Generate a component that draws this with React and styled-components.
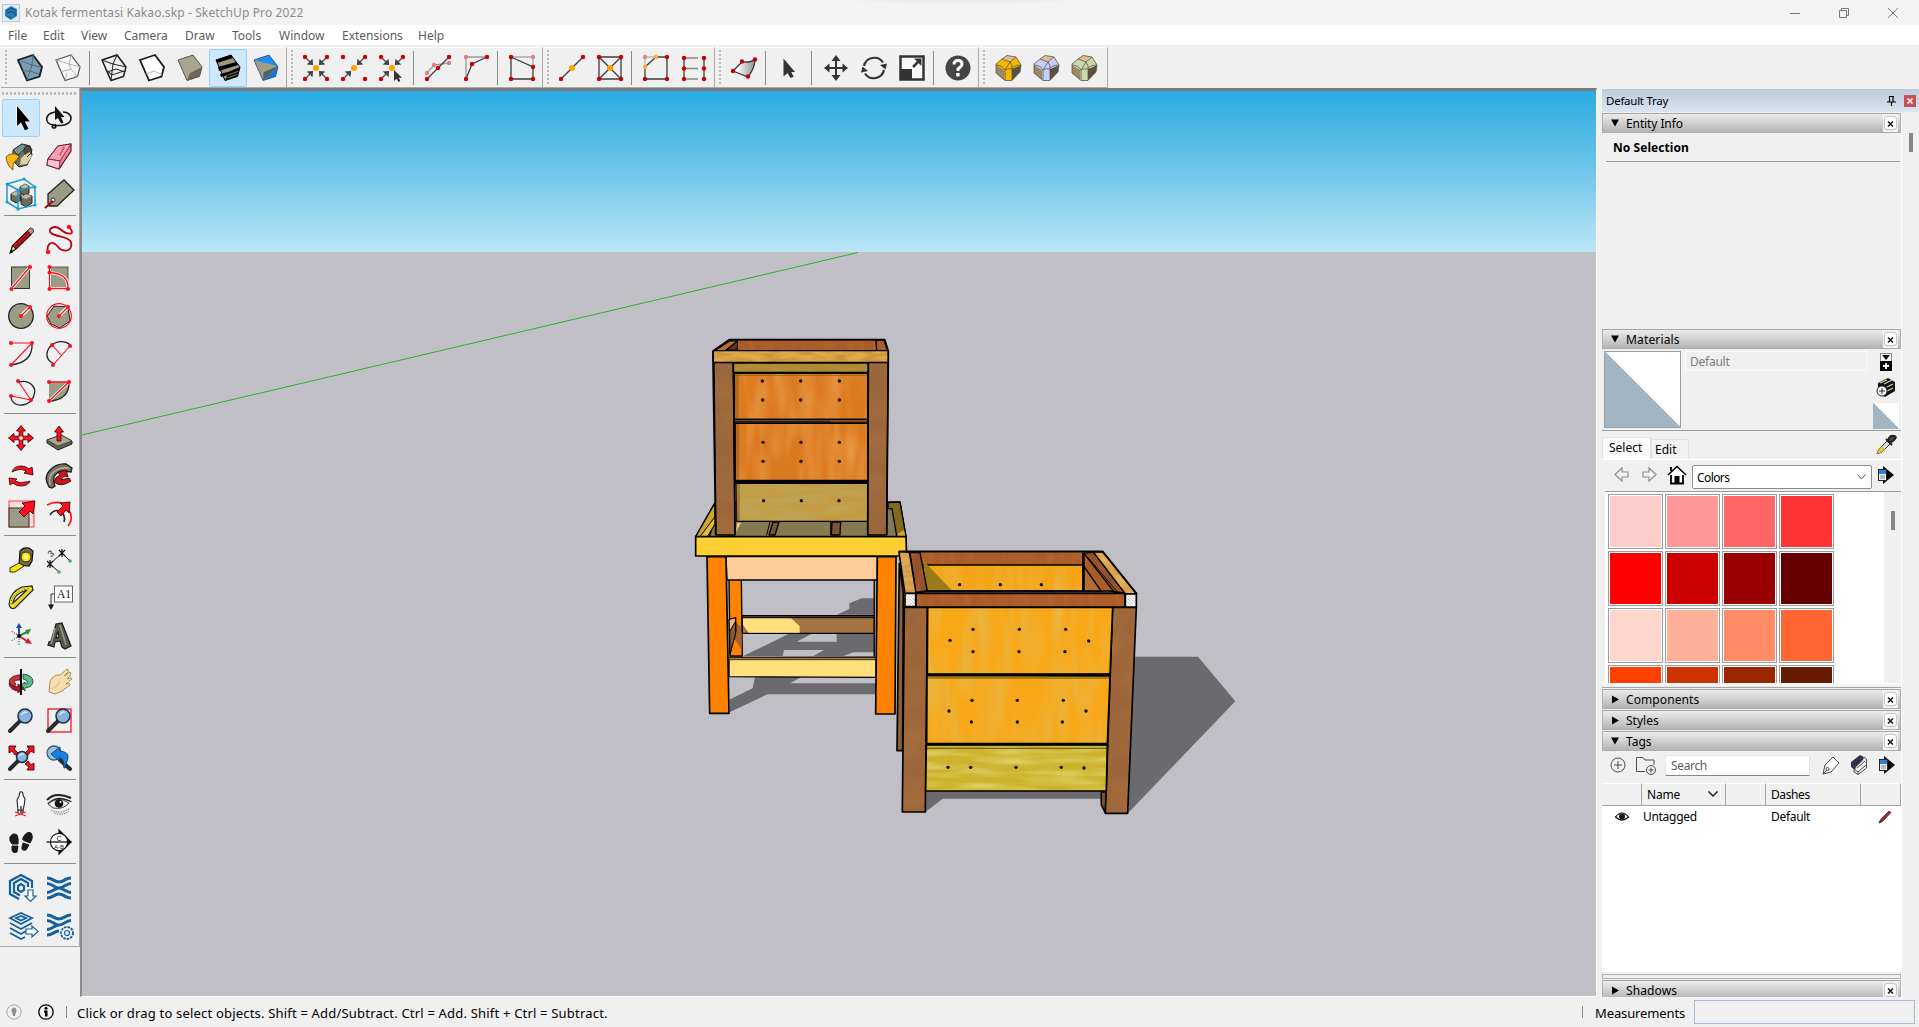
import React from "react";
import styled, { createGlobalStyle, css } from "styled-components";

const UI = '"Noto Sans", "Open Sans", sans-serif';
const STONE = "#9c9c84";
const RED = "#ff0f1c";

const Global = createGlobalStyle`
  * { box-sizing: border-box; }
  html, body { margin: 0; padding: 0; overflow: hidden; }
  body { background: #f0f0f0; font-family: ${UI}; color: #000; }
`;

/* ---------- window frame ---------- */
const Window = styled.div`
  width: 1919px;
  height: 1027px;
  display: flex;
  flex-direction: column;
  background: #f0f0f0;
`;
const TitleBar = styled.header`
  height: 25px;
  flex: none;
  display: flex;
  align-items: center;
  padding: 0 2px;
  background:
    radial-gradient(ellipse 125px 4px at 962px 0, #e4e4e4, #e4e4e400),
    #f3f3f3;
`;
const Title = styled.span`
  flex: 1;
  margin-left: 5px;
  font-size: 12px;
  letter-spacing: 0.11px;
  color: #8c8c8c;
  white-space: nowrap;
`;
const WindowButton = styled.span`
  width: 49px;
  height: 22px;
  display: flex;
  align-items: center;
  justify-content: center;
`;
const MenuBar = styled.nav`
  height: 20px;
  flex: none;
  display: flex;
  align-items: flex-start;
  padding: 2px 0 0 8px;
  background: #fff;
`;
const MenuItem = styled.span`
  width: ${(p) => p.$w}px;
  font-size: 12px;
  line-height: 18px;
  color: #5c5c5c;
  white-space: nowrap;
`;

/* ---------- toolbars ---------- */
const ToolbarRow = styled.div`
  height: 43px;
  flex: none;
  display: flex;
  align-items: stretch;
  padding: 2px 0 0 1px;
`;
const Toolbar = styled.div`
  display: flex;
  align-items: center;
  padding: 1px 1px 1px 0;
  border-top: 1px solid #fbfbfb;
  border-right: 1px solid #a8a8a8;
  border-bottom: 1px solid #a8a8a8;
  &:last-child { padding-right: 4px; }
`;
const Grip = styled.span`
  flex: none;
  ${(p) =>
    p.$horizontal
      ? css`
          height: 3px;
          width: 74px;
          background: repeating-linear-gradient(90deg, #b9b9b9 0 2px, transparent 2px 4px);
        `
      : css`
          width: 2px;
          height: 36px;
          margin: 0 4px;
          background: repeating-linear-gradient(180deg, #b9b9b9 0 2px, transparent 2px 4px);
        `}
`;
const ToolButton = styled.button`
  width: 38px;
  height: 38px;
  flex: none;
  padding: 0;
  border: 1px solid ${(p) => (p.$active ? "#99d1ff" : "transparent")};
  border-radius: 2px;
  background: ${(p) => (p.$active ? "#cce8ff" : "transparent")};
  display: flex;
  align-items: center;
  justify-content: center;
`;
const Divider = styled.span`
  flex: none;
  background: #8a8a8a;
  ${(p) =>
    p.$horizontal
      ? css`
          width: 72px;
          height: 1px;
          margin: 2px 2px 5px;
        `
      : css`
          width: 1px;
          height: 34px;
          margin: 0 5px 0 2px;
        `}
`;
const Glyph = styled.svg`
  display: block;
  flex: none;
  width: ${(p) => p.$w}px;
  height: ${(p) => p.$h || p.$w}px;
  overflow: visible;
`;

const Main = styled.main`
  height: 909px;
  flex: none;
  display: flex;
`;
const LeftDock = styled.aside`
  width: 80px;
  flex: none;
`;
const LeftToolbar = styled.div`
  width: 80px;
  height: 859px;
  padding: 4px 0 0 2px;
  border-right: 1px solid #a8a8a8;
  border-bottom: 1px solid #a8a8a8;
`;
const ToolGrid = styled.div`
  margin-top: ${(p) => (p.$first ? 4 : 0)}px;
  display: grid;
  grid-template-columns: 38px 38px;
  grid-auto-rows: 38px;
`;
const Viewport = styled.section`
  width: 1517px;
  height: 909px;
  flex: none;
  border-style: solid;
  border-width: 3px 1px 1px 2px;
  border-color: #7b7b7b #fff #fff #8a8a8a;
  background: #bfbfc5;
`;
const Canvas = styled.svg`
  display: block;
  width: 1514px;
  height: 905px;
`;

/* ---------- tray ---------- */
const Tray = styled.aside`
  width: 317px;
  margin-left: 5px;
  padding-top: 1px;
  flex: none;
  display: flex;
  flex-direction: column;
`;
const TrayHeader = styled.div`
  height: 23px;
  flex: none;
  display: flex;
  align-items: center;
  padding: 0 3px 0 4px;
  gap: 8px;
  font-size: 11.5px;
  background: linear-gradient(#bccad9, #d8e5f3);
`;
const Grow = styled.span`
  flex: 1;
  white-space: nowrap;
  letter-spacing: ${(p) => p.$ls || 0}px;
`;
const TrayClose = styled.span`
  width: 12px;
  height: 12px;
  background: #c75050;
  display: flex;
  align-items: center;
  justify-content: center;
`;
const TrayBody = styled.div`
  flex: 1;
  display: flex;
  padding-top: 1px;
`;
const Panels = styled.div`
  width: 300px;
  height: 884px;
  overflow: hidden;
  border-right: 1px solid #fff;
  display: flex;
  flex-direction: column;
`;
const TrayScroll = styled.div`
  width: 4px;
  height: 19px;
  margin: 20px 0 0 7px;
  background: #868686;
`;
const PanelHeader = styled.div`
  height: 20px;
  flex: none;
  margin-bottom: ${(p) => p.$gap || 0}px;
  display: flex;
  align-items: center;
  padding: 0 2px 0 8px;
  border: 1px solid #adadad;
  border-top-color: #a6a6a6;
  background: linear-gradient(#ececec, #b4b4b4);
  font-size: 12px;
  line-height: 15px;
  gap: 6px;
`;
const PanelClose = styled.span`
  width: 15px;
  height: 18px;
  background: #f0f0f0;
  display: flex;
  align-items: center;
  justify-content: center;
`;
const CloseFace = styled.span`
  width: 13px;
  height: 14px;
  border: 1px solid #c4c4c4;
  border-radius: 3px;
  background: #fff;
  display: flex;
  align-items: center;
  justify-content: center;
`;
const EntityBody = styled.div`
  height: 196px;
  flex: none;
  padding: 5px 1px 0 4px;
`;
const Selection = styled.div`
  height: 24px;
  padding: 1px 0 0 7px;
  font: bold 12px/18px ${UI};
  letter-spacing: 0.05px;
  border-bottom: 1px solid #9c9c9c;
`;
const MaterialTop = styled.div`
  height: 82px;
  flex: none;
  display: flex;
  padding: 2px 2px 0 2px;
  border-bottom: 1px solid #9c9c9c;
`;
const Preview = styled.div`
  width: ${(p) => p.$size}px;
  height: ${(p) => p.$size}px;
  border: ${(p) => (p.$framed ? "1px solid #989fa5" : "0")};
  background: linear-gradient(to top right, #a1b5c4 50%, #fff 50.5%);
`;
const NameField = styled.div`
  width: 183px;
  height: 20px;
  margin: 0 0 0 4px;
  padding-left: 4px;
  border: 1px solid #fafafa;
  font-size: 12px;
  line-height: 19px;
  letter-spacing: -0.25px;
  color: #7c7c7c;
`;
const IconStack = styled.div`
  margin-left: auto;
  width: 26px;
  padding-top: 2px;
  display: flex;
  flex-direction: column;
  align-items: center;
  gap: 6px;
`;
const Tabs = styled.div`
  height: 29px;
  flex: none;
  display: flex;
  align-items: flex-end;
  border-bottom: 1px solid #fff;
  padding-right: 5px;
`;
const Tab = styled.span`
  width: ${(p) => p.$w}px;
  height: ${(p) => (p.$active ? 22 : 20)}px;
  padding-left: ${(p) => (p.$active ? 6 : 3)}px;
  font-size: 12px;
  line-height: ${(p) => (p.$active ? 20 : 19)}px;
  border: 1px solid #e2e2e2;
  border-bottom: 0;
  background: ${(p) => (p.$active ? "#fbfbfb" : "#f2f2f2")};
`;
const Dropper = styled.span`
  margin: 0 0 4px auto;
`;
const NavRow = styled.div`
  height: 32px;
  flex: none;
  margin-left: 3px;
  padding: 5px 4px 2px 9px;
  display: flex;
  align-items: center;
  border-bottom: 1px solid #9c9c9c;
`;
const NavIcon = styled.span`
  margin: 0 ${(p) => p.$mr || 0}px 5px 0;
`;
const Select = styled.div`
  width: 180px;
  height: 24px;
  margin: 0 6px 0 5px;
  padding: 0 5px 0 4px;
  border: 1px solid #8e8e8e;
  border-radius: 2px;
  background: #fff;
  display: flex;
  align-items: center;
  justify-content: space-between;
  font-size: 12px;
  letter-spacing: -0.6px;
`;
const Library = styled.div`
  height: 191px;
  flex: none;
  margin-left: 3px;
  display: flex;
  background: #f0f0f0;
`;
const SwatchGrid = styled.div`
  width: 279px;
  height: 191px;
  padding: 2px 0 0 3px;
  overflow: hidden;
  background: #fff;
  display: grid;
  grid-template-columns: repeat(4, 55px);
  grid-auto-rows: 55px;
  gap: 2px;
`;
const Swatch = styled.span`
  border: 1px solid #9c9c9c;
  padding: 1px;
  background: ${(p) => p.$c} content-box;
  box-shadow: inset 0 0 0 1px #fff;
`;
const LibraryThumb = styled.span`
  width: 4px;
  height: 19px;
  margin: 19px 0 0 7px;
  background: #868686;
`;
const Splitter = styled.div`
  height: 6px;
  flex: none;
  border-top: 2px solid #fafafa;
  padding-top: 2px;
  &::after { content: ""; display: block; height: 1px; background: #a5a5a5; }
`;
const TagTools = styled.div`
  height: 32px;
  flex: none;
  display: flex;
  align-items: center;
  padding: 0 6px 4px 8px;
`;
const Search = styled.div`
  width: 145px;
  height: 21px;
  margin: 1px 12px 0 8px;
  padding-left: 5px;
  background: #fff;
  border: 1px solid #e5e5e5;
  border-bottom: 1px solid #868686;
  font-size: 12px;
  line-height: 19px;
  letter-spacing: -0.35px;
  color: #5e5e5e;
`;
const TagGap = styled.span`
  width: ${(p) => p.$w}px;
`;
const TagTable = styled.div`
  height: 189px;
  flex: none;
  background: #fff;
`;
const TagRow = styled.div`
  height: ${(p) => (p.$head ? 23 : 22)}px;
  display: grid;
  grid-template-columns: 40px 84px 40px 95px 40px;
  background: ${(p) => (p.$head ? "#f0f0f0" : "#fff")};
  border-bottom: ${(p) => (p.$head ? "1px solid #a5a5a5" : "0")};
  font-size: 12px;
`;
const Cell = styled.span`
  display: flex;
  align-items: center;
  justify-content: ${(p) => p.$j || "flex-start"};
  padding: 0 ${(p) => p.$pr || 0}px 1px ${(p) => p.$pl || 0}px;
  border-right: ${(p) => (p.$rule ? "1px solid #a5a5a5" : "0")};
  border-top: ${(p) => (p.$rule ? "1px solid #fff" : "0")};
  letter-spacing: ${(p) => p.$ls || 0}px;
`;
const BottomSplit = styled.div`
  height: 5px;
  flex: none;
  margin: 2px 0 1px;
  border: 1px solid #b0b0b0;
`;

/* ---------- status bar ---------- */
const StatusBar = styled.footer`
  height: 30px;
  flex: none;
  display: flex;
  align-items: center;
  padding: 0 4px 0 6px;
  font-size: 13px;
`;
const StatusText = styled.span`
  flex: 1;
  padding: 2px 0 0 10px;
  letter-spacing: 0.19px;
  white-space: nowrap;
`;
const Bar = styled.span`
  width: 1px;
  height: 12px;
  background: #8c8c8c;
  margin-right: ${(p) => p.$mr || 0}px;
`;
const MeasureLabel = styled.span`
  width: 99px;
  padding-top: 2px;
  letter-spacing: -0.12px;
`;
const MeasureBox = styled.span`
  width: 221px;
  height: 24px;
  border: 1px solid #a9bbd9;
`;

/* ---------- icon drawing helpers ---------- */
const I = ({ children, s = 36 }) => (
  <Glyph $w={s} viewBox={`${-s / 2} ${-s / 2} ${s} ${s}`} fill="none">
    {children}
  </Glyph>
);
const Dots = ({ pts, r = 2.2, c = "#c80000" }) =>
  pts.map(([x, y], i) => <circle key={i} cx={x} cy={y} r={r} fill={c} />);
const L = ({ d, c = "#3c3c3c", w = 1.3, f = "none", ...o }) => (
  <path d={d} stroke={c} strokeWidth={w} fill={f} {...o} />
);
const CUBE = "M-12-8 3-13 12-1 9.500 8.500-3 12.500Z";
const inwards = (x, y) => {
  const sx = Math.sign(x), sy = Math.sign(y);
  return `M${x - sx * 1.5} ${y - sy * 1.5}L${sx * 5} ${sy * 5}M${sx * 3.5} ${sy * 3.5}l${sx * 4.5} ${sy * 0.5}l${-sx * 4} ${sy * 4}Z`;
};
const Corner = ({ x, y }) => <L d={inwards(x, y)} f="#444" c="#444" w="1.2" />;
const c4 = [[-11, -11], [11, -11], [-11, 11], [11, 11]];

/* ---------- top toolbar icons ---------- */
const XRay = () => <I><L d={CUBE} f="#7c9db3" c="#141c22" w="1.8" /><L d="M-9-7 2-3 10-1M2-3 3-13M2-3 0 3-3 12M0 3 9 6M0 3-8 3" c="#4c6c80" w="1" /></I>;
const BackEdges = () => <I><L d={CUBE} f="#f8f8f8" c="#555" w="1.2" /><L d="M-12-8 1-4 3-13M1-4 12-1M-8 4 3 1 9.500 8.500M3 1 1-4M-3 12.500-1 5" c="#b4b4b4" w="1" /></I>;
const Wire = () => <I><L d={CUBE} c="#1c1c1c" w="1.5" /><L d="M-12-8-1-4 3-13M-1-4 12-1M-7 4 2 1 11 4M-1-4-3 12.500M-8 2-2 7 10 3" c="#333" w="1.100" /></I>;
const Hidden = () => <I><L d={CUBE} f="#fff" c="#1c1c1c" w="1.800" /><L d="M-6 6 2 3 10 7" c="#aaa" w=".9" /></I>;
const Solid = () => <I><path d={CUBE} fill="#a8a58f" /><path d="M-3 12.500 0 5 12-1 9.500 8.500Z" fill="#69665a" /><L d={CUBE} c="#5b5a4e" w="1" /></I>;
const Textured = () => (
  <I>
    <path d={CUBE} fill="#9c9780" />
    <path d="M-12-8 3-13 5-10-11-5ZM-10-1 8-6 10-3-9 3ZM-8 6 0 4 12-1 11 2 0 7-7 9Z" fill="#000" />
    <path d="M-3 12.500 0 6 12-1 9.500 8.500Z" fill="#000" /><path d="M-1 10 10 6M0 7 11 3" stroke="#77705c" strokeWidth="1.200" />
    <L d={CUBE} c="#000" w="1" />
  </I>
);
const Mono = () => <I><path d={CUBE} fill="#1e90f5" /><path d="M-12-8 12-2-3 5-3 12Z" fill="#a39c86" /><path d="M-12-8 3-13 12-2Z" fill="#1e90f5" /><path d="M-3 12.500 12-1 9.500 8.500Z" fill="#1978d0" /><path d="M-3 12.500-2 4 12-2Z" fill="#625f52" /><L d={CUBE} c="#36506b" w=".8" /></I>;
const Center4 = () => <I>{c4.map(([x, y]) => <Corner key={x + "," + y} x={x} y={y} />)}<Dots pts={c4} /><circle r="3" fill="#ffa200" /></I>;
const Center2 = () => <I><Corner x={11} y={-11} /><Corner x={-11} y={11} /><Dots pts={c4} /><circle r="3" fill="#ffa200" /></I>;
const CenterCursor = () => <I>{c4.slice(0, 3).map(([x, y]) => <Corner key={x + "," + y} x={x} y={y} />)}<Dots pts={c4.slice(0, 3)} /><circle r="3" fill="#ffa200" /><path d="M2 2v11l2.500-2.300L6.500 14l1.800-1L6.800 9.700H10Z" fill="#333" /></I>;
const Smooth = () => <I><L d="M-11 5-4-3 11-5" c="#999" /><L d="M-11 11 0 0 11-11" /><Dots pts={[[-11, 5], [-4, -3], [11, -5]]} c="#e08080" /><Dots pts={[[-11, 11], [0, 0], [11, -11]]} /></I>;
const Weld = () => <I><L d="M-10 11V-11H11" c="#999" /><L d="M-10 11-4-4 11-11" /><Dots pts={[[-10, -11]]} c="#e08080" /><Dots pts={[[-10, 11], [-4, -4], [11, -11]]} /></I>;
const Quad = () => <I><L d="M-11-11H11V0" c="#aaa" /><L d="M-11-11 11-1V11H-11Z" /><Dots pts={[[11, -11]]} c="#e08080" /><Dots pts={[[-11, -11], [11, -1], [11, 11], [-11, 11]]} /></I>;
const Mid = () => <I><L d="M-11 11 11-11" /><Dots pts={[[-11, 11], [11, -11]]} /><circle r="3" fill="#ffa200" /></I>;
const BoxMid = () => <I><L d="M-11-11H11V11H-11ZM-11-11 11 11M-11 11 11-11" /><Dots pts={c4} /><circle r="3" fill="#ffa200" /></I>;
const Chamfer = () => <I><L d="M-11 0V-11H0" c="#bbb" /><L d="M-11 11V-1L0-11H11V11Z" /><Dots pts={[[-11, -11]]} c="#e08080" /><Dots pts={[[-11, -1], [0, -11]]} c="#ffb030" /><Dots pts={[[-11, 11], [11, -11], [11, 11]]} /></I>;
const Ladder = () => <I><L d="M-10-10V11M10-10V11" /><L d="M-10-10H4M-10 .5H4M-10 11H4" c="#888" /><Dots pts={[[-10, -10], [10, -10], [-10, 0.5], [10, 0.5], [-10, 11], [10, 11]]} /></I>;
const Patch = () => (
  <I>
    <defs><linearGradient id="patch"><stop offset=".2" stopColor="#fff" /><stop offset="1" stopColor="#8e8e8e" /></linearGradient></defs>
    <path d="M-11 3-2-6Q7-5 11-9 11 0 4 9Z" fill="url(#patch)" stroke="#333" strokeWidth="1.2" />
    <Dots pts={[[-11, 3], [-2, -6.5], [11, -8.5], [4, 8.5]]} />
  </I>
);
const Pointer = () => <I><path transform="translate(-1.500 .5)" d="M-5-10V8l4-3.500L2 9.500l3.200-1.200L2.700 3.500H6.500Z" fill="#333" /></I>;
const MoveDark = () => <I><L d="M-8 0H8M0-8V8" c="#333" w="2" /><path d="M0-13 4.500-7h-9ZM0 13l4.500-6h-9ZM-12 0l5.500-4.500v9ZM12 0 6.500-4.500v9Z" fill="#333" /></I>;
const RotateDark = () => <I><L d="M-10-2A10.500 10.500 0 0 1 9-5.500M10 2A10.500 10.500 0 0 1-9 5.500" c="#333" w="2.200" /><path d="M13-4.500 11.500 1.500 6-3ZM-13 4.500-11.500-1.500-6 3Z" fill="#333" /></I>;
const ScaleDark = () => <I><rect x="-11.500" y="-11.500" width="23" height="23" fill="#f8f8f8" stroke="#333" strokeWidth="2.500" /><path d="M-12 1H0V12H-12Z" fill="#333" /><L d="M1-1 8-8" c="#333" w="2.500" /><path d="M2-9.500H9.500V-2L7-4.500 4.500-7Z" fill="#333" /></I>;
const Help = () => <I><circle r="12.500" fill="#444" /><L d="M-4-3.500Q-4-7.500 0-7.500T4-4Q4-2 0 1V3" c="#fff" w="3" /><rect x="-1.800" y="5" width="3.400" height="3.400" fill="#fff" /></I>;
const Round = ({ c }) => (
  <I>
    <path d="M-12-4-2-12 8-11 13-3 12 4 4 12.500H-3L-12 5Z" fill={c} />
    <path d="M-6-9-1-12.500 8-11 2-6Z" fill="#dfbd92" /><path d="M-12-3-4 2V12L-12 5Z" fill="#9c8869" /><path d="M13-3 4 1V12L12 4Z" fill="#5a5143" />
    <path d="M-12-4-6-9 2-6 8-11 13-3 4 1Q0-4-3 2Z" fill={c} />
    <L d="M-12-4-6-9-1-12.500 8-11 13-3 12 4 4 12.500H-3L-12 5ZM-6-9 2-6 8-11M-12-3Q-6-3-3 2V12M13-3Q6-3 4 1V12M-3 2Q0-3 2-6M4 1Q5-2 2-6M-3 2Q0 0 4 1" c="#5d574b" w=".8" />
  </I>
);

/* ---------- left toolbar icons ---------- */
const SelectTool = () => <I><path d="M-4-12V8L0 4.500 4 12.500 7.500 10.800 3.800 3.500H9Z" fill="#000" stroke="#fff" strokeWidth="1.500" paintOrder="stroke" /></I>;
const Lasso = () => <I><L d="M-5 7C-15 6-15-4-4-6M4-6C15-6 15 7 2 7.500H-6M-6 7q-2 3 1 3t1-4" c="#111" w="1.600" /><path d="M-4-12V2L-1 0 2 5.500 4.500 4.500 2-1H5.500Z" fill="#111" /></I>;
const Paint = () => <I><path d="M-8-6 1-12 9-10 11-1 6 9-2 11-8 5Z" fill="#6c6a5a" stroke="#222" /><path d="M-8-6 1-12 7-10-3-1Z" fill="#789393" stroke="#222" strokeWidth=".8" /><path d="M0 2 8-5 11 0 6 8-1 9Z" fill="#d9cfa6" /><path d="M2-5 8-9 10-5 4-1Z" fill="#4b4b42" /><path d="M-15-1Q-9-7-2-2L-4 2Q-9 4-8 12-14 8-15-1Z" transform="translate(0 2)" fill="#fdb913" stroke="#5a4300" strokeWidth=".8" /><L d="M3-6Q4-12 9-9T6 1" c="#222" w="1" /></I>;
const Eraser = () => <I><path d="M-1-10 12-12 12-5 0 13-12 9-11 3Z" fill="#f77f97" stroke="#5a1b28" strokeWidth="1.200" /><path d="M-1-10 12-12 1 5-11 3Z" fill="#ff9fb3" stroke="#5a1b28" strokeWidth=".8" /><path d="M-11 3 1 5 0 13-12 9Z" fill="#ffc3cf" stroke="#5a1b28" strokeWidth=".8" /><L d="M5-9 1-1" c="#a03050" w="2" strokeDasharray="1 1" /></I>;
const Components = () => <I><path d="M-10 0l5-3 5 2v7l-5 3-5-3ZM-1-7l5-3 4 2v7l-4 2-5-2ZM0 3l5-3 6 2v7l-6 4-5-3Z" fill="#6d6a59" stroke="#222" /><path d="M-10 0l5-3 5 2-5 3ZM-1-7l5-3 4 2-4 3ZM0 3l5-3 6 2-6 3Z" fill="#bdb9a2" /><L d="M-14-10 3-15 14-7V11L-3 15-14 8ZM-14-10-3-4 14-7M-3-4V15" c="#179bd7" w="1.500" /><Dots pts={[[-14, -10], [3, -15], [14, -7], [14, 11], [-3, 15], [-14, 8], [-3, -4]]} r={1.5} c="#179bd7" /></I>;
const TagTool = () => <I><path d="M-11 0 5-14 15-4-2 12H-9Q-11 12-11 9Z" fill={STONE} stroke="#222" strokeWidth="1.300" /><circle cx="-6" cy="6" r="2" fill="#eee" stroke="#333" /><L d="M-14 14-6 7" c="#b00010" w="2" /></I>;
const Pencil = () => <I><path d="M-10 12-8.500 5.500 6.500-9 10-5.500-5 9Z" fill="#e01b1b" stroke="#1c0b0b" strokeWidth="1.200" /><L d="M-6 7 9-8" c="#8d0d10" w="1.300" /><path d="M6.500-9 9-12Q13-12 12.500-8L10-5.500Z" fill="#e57d86" stroke="#333" /><path d="M-10 12-8.500 5.500-5 9Z" fill="#e8c890" stroke="#111" /><path d="M-12 14-10 9.500-7.500 12Z" fill="#000" /></I>;
const Freehand = () => <I><L d="M10-13C18-4 8-5 1-11-4-15-12-12-8-7-4-3 10-4 12 2 14 11 6 12 1 9-2 6-4 2-8 3-12 5-12 8-11 12" c="#c00010" w="1.800" /><Dots pts={[[10, -13], [-11, 12]]} c={RED} /></I>;
const RectTool = () => <I><rect x="-9.500" y="-11" width="18" height="21.500" fill={STONE} stroke="#333" /><L d="M-9.500 10.500 9-11" c="#fff" w="3" /><L d="M-9.500 10.500 9-11" c={RED} /><Dots pts={[[-9.5, 11], [9, -11]]} c={RED} r={2} /></I>;
const RotRect = () => <I><rect x="-9.500" y="-11" width="18.500" height="22" fill={STONE} stroke="#333" strokeWidth=".7" /><L d="M-9.500-11V10.500H9Q10-4-9.500-5.500" c="#fff" w="3" /><L d="M-9.500-11V10.500H9Q10-4-9.500-5.500" c={RED} /><Dots pts={[[-9.5, -11], [-9.5, -5.5], [-9.5, 11], [9, 11]]} c={RED} r={2} /></I>;
const CircleTool = () => <I><circle r="12.300" fill={STONE} stroke="#222" strokeWidth="1.300" /><L d="M0 0 9-9" c="#fff" w="3.500" /><L d="M0 0 9-9" c={RED} /><Dots pts={[[0, 0], [9, -9]]} c={RED} r={2} /></I>;
const Polygon = () => <I><path d="M-12 0-5-10 9-9 11 5 1 12-8 8Z" fill={STONE} stroke="#222" /><circle r="12.300" stroke={RED} strokeWidth="1.200" /><L d="M0 0 9-9" c="#fff" w="3.500" /><L d="M0 0 9-9" c={RED} /><Dots pts={[[0, 0], [9, -9]]} c={RED} r={2} /></I>;
const Arc1 = () => <I><L d="M11-10Q12 8-10 11" c="#222" w="1.300" /><L d="M-10-11H11L-10 11" c={RED} w="1.100" /><Dots pts={[[-10, -11], [11, -11], [-10, 11]]} c={RED} r={2} /></I>;
const Arc2 = () => <I><L d="M-5 10C-17 4-11-6-7-9 0-15 11-12 12-7" c="#222" w="1.300" /><L d="M-6 11 11-8M-7-9 3 2" c={RED} w="1.100" /><Dots pts={[[-6, 11], [11, -8], [-7, -9]]} c={RED} r={2} /></I>;
const Arc3 = () => <I><L d="M-2-10C9-13 16-4 13 3 11 15-9 17-10 5" c="#222" w="1.300" /><L d="M-3-11 10 8-10 4" c={RED} w="1.100" /><Dots pts={[[-3, -11], [10, 8], [-10, 4]]} c={RED} r={2} /></I>;
const Pie = () => <I><path d="M-10-10V10Q9 8 11-10Z" fill={STONE} /><L d="M-10 9Q10 8 10-9" c="#222" w="1.300" /><L d="M-10 9 10-10" c="#fff" w="3" /><L d="M10-10H-10M-10 9 10-10" c={RED} /><Dots pts={[[-10, -10], [10, -10], [-10, 9]]} c={RED} r={2} /></I>;
const MoveRed = () => <I><path d="M0-12.500 4.500-7H1.800V-1.800H7V-4.500L12.500 0 7 4.500V1.800H1.800V7H4.500L0 12.500-4.500 7H-1.800V1.800H-7V4.500L-12.500 0-7-4.500V-1.800H-1.800V-7H-4.500Z" fill={RED} stroke="#3a0a0c" strokeWidth=".9" /><circle r="1.800" fill="#fff" /></I>;
const PushPull = () => <I><path d="M-12 2 2-3 13 3V6L-1 12-12 5Z" fill="#5f5f50" stroke="#222" /><path d="M-12 2 2-3 13 3-1 8Z" fill="#a9a891" stroke="#333" strokeWidth=".7" /><path d="M0-12 4.500-6H2V3H-2V-6H-4.500Z" fill={RED} stroke="#3a0a0c" strokeWidth=".9" /></I>;
const RotateRed = () => <I><path d="M-9-4Q-7-10 0-10 5-10 8-7L11-9 12-1 3-3 5-5Q0-8-4-6-7-5-9-4ZM9 5Q7 10 0 10-5 10-8 7L-11 9-12 2-4 3-6 5Q0 8 4 6 7 6 9 5Z" fill={RED} stroke="#3a0a0c" strokeWidth=".9" /></I>;
const FollowMe = () => <I><path d="M-10 11Q-16 1-9-6-2-13 7-12L13-8 12-4 4-5Q-3-4-5 1-6 6-4 10L-7 12Z" fill="#74735f" stroke="#1c1c18" strokeWidth="1.300" /><L d="M-9 9Q-11-1-4-5 2-9 10-8" c="#b1b09a" w="1.500" /><path d="M-5 6Q-4 1 1-1L-1-4 7-6 9 1 6 0Q3 1 2 4L10 2 12 5Q2 12-5 6Z" fill="#c5161d" stroke="#400" strokeWidth=".9" /></I>;
const ScaleRed = () => <I><rect x="-12" y="-13" width="25" height="26" stroke={RED} strokeWidth=".8" fill="#fbdcdc" /><rect x="-12" y="-6" width="20" height="19" fill={STONE} stroke="#333" /><path d="M14-13 12 0 9-3 3 3-2-2 4-8 1-11Z" fill={RED} stroke="#3a0a0c" strokeWidth=".9" /></I>;
const Offset = () => <I><L d="M-12-9Q3-16 10-4 15 5 9 12" c={RED} w="1.600" /><L d="M-9 1Q-5-5 1-3 7 1 5 8" c="#222" w="1.600" /><path d="M11-12 10-1 7-4 2 2-2-2 4-8 1-11Z" fill={RED} stroke="#3a0a0c" strokeWidth=".9" /></I>;
const Tape = () => <I><path d="M-1-9Q2-13 8-12L12-9 11 1 8 6-2 5Z" fill="#6d6b4a" stroke="#111" strokeWidth="1.200" /><circle cx="5" cy="-3" r="5" fill="#ffe400" stroke="#222" /><circle cx="5" cy="-3" r="2.200" fill="#fff6a0" /><path d="M-2 3 3 6-6 12-11 12-11 8Z" fill="#ffe400" stroke="#222" /></I>;
const Dimension = () => <I><L d="M-9 4 3-7M-9 4 0 12M3-7 10 0" c="#111" w="1" /><L d="M-12 1-6 7M-12 7-6 1M-9 0V8M0-10 6-4M0-4 6-10M3-11V-3" c="#111" w="1.200" /><Dots pts={[[0, 12], [11, 1]]} c="#3bb54a" r={1.8} /><text x="-10" y="-4" fontFamily="Liberation Sans, sans-serif" fontSize="9" fill="#111" transform="rotate(-42 -7 -6)">3</text></I>;
const Protractor = () => <I><path fillRule="evenodd" d="M-12 6Q-11-6 1-11L11-12 12-8-6 10Q-11 12-12 6ZM-8 5Q-7-4 6-8Z" fill="#e8d92d" stroke="#222" strokeWidth="1.200" /><L d="M-10 6Q-9-6 9-10" c="#5c5200" w="1" strokeDasharray="1 2" /></I>;
const TextTool = () => <I><rect x="-4.500" y="-12" width="18" height="16" fill="#fff" stroke="#666" /><text x="-2" y="0" fontFamily="Liberation Serif, serif" fontSize="11.500" fill="#111">A1</text><L d="M-5-4H-8V7" c="#333" w="1" /><path d="M-8 12-5 6.500h-6Z" fill="#111" /></I>;
const Axes = () => <I><L d="M-2 0V-9" c="#1d4c9e" w="2" /><path d="M-2-13 1-8h-6Z" fill="#1d4c9e" /><L d="M-2 0 6-4" c="#2c8b36" w="2" /><path d="M10-7 7-1 4-6Z" fill="#2c8b36" /><L d="M-2 0 6 5" c="#d41c26" w="2" /><path d="M11 8 4 7 7 2Z" fill="#d41c26" /><L d="M-2 0-10 5" c="#2c8b36" strokeDasharray="1 1.500" /><L d="M-2 0-10-5" c="#d41c26" strokeDasharray="1 1.500" /><L d="M-2 0V10" c="#1d4c9e" strokeDasharray="1 1.500" /><circle cx="-2" r="2" fill="#111" /></I>;
const Text3D = () => <I><path fillRule="evenodd" d="M-3-12 3-13 12 10 6 13 3 11 1 5-4 6-5 11-11 9-10 6-8 5ZM-1-5-3 2 0 1Z" fill="#59594b" stroke="#1c1c18" strokeWidth="1.200" /><L d="M1-11 7 9M-4-8-8 8" c="#99988a" w="1.500" /></I>;
const Orbit = () => <I><path d="M-11 2C-14-4-6-7-1-7V-2C-7-2-8 0-5 2L-7 5Z" fill="#c7383e" stroke="#511" strokeWidth=".9" /><path d="M2-8Q11-7 12-1 12 5 4 6L4 9-1 4 4 0V2Q8 1 6-1T2-3Z" fill="#5dbb88" stroke="#153" strokeWidth=".9" /><path d="M-12 1Q-9 5-3 5V2L3 6-3 11V9Q-11 8-12 1Z" fill="#b5152b" stroke="#511" strokeWidth=".9" /><L d="M0-13V13" c="#000" w="2" /></I>;
const Pan = () => <I><path d="M-10 10-9-1Q-5-8 1-7L8-13Q10-13 9-10L5-6 11-10Q13-9 11-6L8-3Q13-5 13-3L7 2Q12 1 11 3L3 9-4 12Z" fill="#f5deb0" stroke="#a08248" strokeWidth=".9" /><L d="M-8 7Q-1 5 1-1" c="#e6c890" /></I>;
const Lens = ({ x = 4, y = -4, r = 7 }) => (<><L d={`M${x - r * 0.7} ${y + r * 0.7}L-11 11`} c="#2a2a2a" w="4" strokeLinecap="round" /><circle cx={x} cy={y} r={r} fill="#86b4df" stroke="#1c2d3f" strokeWidth="1.500" /><L d={`M${x - r * 0.5} ${y - 1}Q${x - 1} ${y - r * 0.7} ${x + 2} ${y - r * 0.5}`} c="#d2e6f7" w="1.600" /></>);
const Zoom = () => <I><Lens /></I>;
const ZoomWindow = () => <I><rect x="-11" y="-11" width="23" height="23" stroke={RED} strokeWidth="1.300" /><Lens /></I>;
const ZoomExtents = () => <I><Lens x={1} y={-1} r={5.5} /><path d="M-12-12-5-12-7-9-3-5-6-3-9-7-12-5ZM13-12 6-12 8-9 4-5 7-3 10-7 13-5ZM13 12 6 12 8 9 4 6 7 3 10 7 13 5Z" fill={RED} stroke="#3a0a0c" strokeWidth=".9" /></I>;
const Previous = () => <I><circle cx="-5" cy="-5" r="7" fill="#9fc1de" stroke="#3c5c78" strokeWidth="1.300" /><L d="M1 2 11 11" c="#2a2a2a" w="4" strokeLinecap="round" /><path d="M-8-4 1-11V-7Q10-6 9 0L6 10Q4 11 5 5 4 0 0-1L0 3Z" fill="#1683e2" stroke="#0b3c6c" strokeWidth=".9" /></I>;
const Position = () => <I><path d="M-1-12Q2-13 2-9L4-5 3 2 2 6H-3L-4-4-2-8Z" fill="#fff" stroke="#222" strokeWidth="1.100" /><L d="M0 2V9M-3 6V9M2 6V9" c="#222" /><L d="M-6 8 5 12M-6 12 5 8" c={RED} w="1" /></I>;
const LookAround = () => <I><L d="M-12-4Q-4-13 12-6" c="#222" w="2" /><L d="M-11 0Q-4-7 4-5T12-2" c="#222" w="1.800" /><path d="M-11 0Q-4-6 4-4L10-1Q4 6-6 4Z" fill="#eee" stroke="#444" strokeWidth="1" /><circle cx="0" cy="-.500" r="4.300" fill="#151515" /><circle cx="1.500" cy="-2" r="1" fill="#fff" /><L d="M-8 6Q2 11 11 4M-5 9Q4 12 10 7" c="#888" w="1.200" strokeDasharray="1.500 1" /></I>;
const Walk = () => <I><path d="M-11-5Q-8-10-4-7-2-3-3 2H-9Q-12-1-11-5ZM-9 4H-3L-4 10Q-8 12-9 8ZM3-6Q6-11 10-9 13-5 9 1L4-1Q0-2 3-6ZM2 1 8 3 5 8Q0 9 1 5Z" fill="#1a1a1a" stroke="#1a1a1a" /></I>;
const Section = () => <I><path d="M0-12 12 0 0 12Z" fill="#111" stroke="#111" strokeWidth="1.200" /><circle r="8.600" fill="#fff" stroke="#111" strokeWidth="1.100" /><L d="M-12.500 0H12.500" c="#111" w="1.300" /><text y="-1.500" textAnchor="middle" fontFamily="Liberation Sans, sans-serif" fontSize="7" fill="#111">C</text><text y="6.500" textAnchor="middle" fontFamily="Liberation Sans, sans-serif" fontSize="6" fill="#111">A-B</text></I>;
const BLUE = "#15619c";
const Warehouse = () => <I><L d="M11 0V-7L0-13-11-7V6L-2 11M7-1V-5L0-9-7-5V4L-1 7.500M-3-2 0-4 3-2V2L0 4-3 2Z" c={BLUE} w="2.200" /><path d="M7 2h5v6h3l-5.500 5.500L4 8h3Z" fill="#fff" stroke={BLUE} strokeWidth="1.200" /></I>;
const Extension = () => <I><L d="M-12-10C-6-10-5-6 0-6S6-10 12-10M-12-4.500C-7-4.500-4 0 0 0S7-4.500 12-4.500M-12 4.500C-7 4.500-4 0 0 0S7 4.500 12 4.500M-12 10C-6 10-5 6 0 6S6 10 12 10" c={BLUE} w="3" /></I>;
const ShareModel = () => <I><L d="M-11-8 0-13 11-8 0-2ZM-5-8 0-10 5-8 0-5.500ZM-11-3 0 3 11-3M-11 2 0 8 5 5M-11 7 0 13 4 11" c={BLUE} w="1.800" /><path d="M5 4h6V1l6 5.500-6 5.500V9H5Z" transform="translate(0 -1)" fill="#fff" stroke={BLUE} strokeWidth="1.200" /></I>;
const ExtManager = () => <I><L d="M-12-11C-6-11-5-7 0-7S6-11 12-11M-12-5.500C-7-5.500-4-1 0-1S7-5.500 12-5.500M-12 3.500C-7 3.500-4-1 0-1M-12 9C-6 9-5 5 0 5" c={BLUE} w="3" /><circle cx="8" cy="7" r="6" fill="#f0f0f0" stroke={BLUE} strokeWidth="1.800" strokeDasharray="2.500 1" /><circle cx="8" cy="7" r="2.500" stroke={BLUE} strokeWidth="1.200" /></I>;

const TOP = [
  [XRay, BackEdges, "|", Wire, Hidden, Solid, [Textured], Mono],
  [Center4, Center2, CenterCursor, "|", Smooth, Weld, "|", Quad],
  [Mid, BoxMid, "|", Chamfer, Ladder],
  [Patch, "|", Pointer, "|", MoveDark, RotateDark, ScaleDark, "|", Help],
  [() => <Round c="#f5b800" />, () => <Round c="#c5d0fb" />, () => <Round c="#c7dba9" />],
];
const LEFT = [
  [SelectTool, Lasso, Paint, Eraser, Components, TagTool],
  [Pencil, Freehand, RectTool, RotRect, CircleTool, Polygon, Arc1, Arc2, Arc3, Pie],
  [MoveRed, PushPull, RotateRed, FollowMe, ScaleRed, Offset],
  [Tape, Dimension, Protractor, TextTool, Axes, Text3D],
  [Orbit, Pan, Zoom, ZoomWindow, ZoomExtents, Previous],
  [Position, LookAround, Walk, Section],
  [Warehouse, Extension, ShareModel, ExtManager],
];

/* ---------- 3D model ---------- */
const P = ({ p, f, w = 4, g }) => (
  <>
    <polygon points={p} fill={f} filter={g ? `url(#${g})` : undefined} />
    {w > 0 && <polygon points={p} stroke="#000" strokeWidth={w} strokeLinejoin="round" />}
  </>
);
const Holes = ({ pts }) => pts.map(([x, y], i) => <circle key={i} cx={x} cy={y} r="5" fill="#0c0a06" />);
const Grain = ({ id, freq, c, a, seed }) => (
  <filter id={id} x="0" y="0" width="100%" height="100%" colorInterpolationFilters="sRGB">
    <feTurbulence type="fractalNoise" baseFrequency={freq} numOctaves="2" seed={seed} result="n" />
    <feColorMatrix in="n" values={`0 0 0 0 ${c[0]} 0 0 0 0 ${c[1]} 0 0 0 0 ${c[2]} ${a} 0 0 0 ${-a * 0.36}`} result="t" />
    <feComposite in="t" in2="SourceGraphic" operator="in" result="g" />
    <feMerge><feMergeNode in="SourceGraphic" /><feMergeNode in="g" /></feMerge>
  </filter>
);
const SHADE = "#6b6a6f";
const GROUND = "#bfbfc5";

const Table = () => (
  <>
    <P w={0} f={SHADE} p="470,884 508,867 508,850 545,835 584,835 584,884" />
    <P w={0} f={SHADE} p="190,1008 330,940 582,940 582,1010" />
    <P w={0} f={GROUND} p="398,940 470,940 470,965 350,965" />
    <P w={0} f={GROUND} p="312,990 432,990 400,1008 308,1008" />
    <P w={0} f={GROUND} p="490,1008 520,997 582,997 582,1008" />
    <P w={0} f={SHADE} p="225,1070 366,1070 330,1090 588,1090 588,1123 262,1123 150,1176 150,1138 218,1105" />
    <P f="#ff8200" p="147,778 184,778 187,1008 150,1008" />
    <P w={0} f="#a4642c" p="167,905 185,925 185,990 164,958" />
    <P f="#f0b98a" p="147,898 167,893 167,935 150,1000" />
    <P w={3} f="#8a5a34" p="149,935 167,903 167,940 150,1002" />
    <P f="#a57442" p="187,887 583,887 583,940 187,940" />
    <P w={0} f="#ffe07c" p="189,893 332,893 359,919 359,938 206,938 189,914" />
    <path d="M187 892H583M583 780V1010" stroke="#1a1008" strokeWidth="5" />
    <P f="#ffe07c" p="147,1012 588,1012 588,1072 147,1070" />
    <path d="M147 1015H588" stroke="#b4783f" strokeWidth="4" /><path d="M147 1019H588" stroke="#000" strokeWidth="2.500" />
    <P f="#ffcd9c" p="138,710 592,710 592,780 141,780" />
    <P w={5} f="#ff8200" p="81,710 138,710 147,1180 89,1180" />
    <P w={5} f="#ff8200" p="592,710 648,710 645,1182 587,1182" />
    <P f="#847a50" p="47,650 105,548 660,546 678,650" />
    <P f="#cfa527" p="47,650 105,548 105,600 88,650" />
    <P w={3} f="#e2b93a" p="60,650 105,590 105,612 82,650" />
    <P f="#7a553c" p="267,645 279,606 297,606 285,645" />
    <P f="#7a553c" p="456,606 482,606 480,645 454,645" />
    <path d="M260 645 270 606M452 606V645" stroke="#000" strokeWidth="3" />
    <P w={0} f="#f5c983" p="172,608 183,608 168,636" />
    <P f="#806b1c" p="624,548 660,546 678,650 650,648 636,566 624,566" />
    <P w={0} f="#cfa52a" p="655,640 672,630 676,648 652,648" />
    <P w={5} f="#ffd034" p="47,650 678,650 680,708 47,708" />
  </>
);
const UpperBox = () => (
  <>
    <P f="#ad602a" p="100,92 147,59 615,59 625,92" />
    <P g="gWalnut" w={0} f="#a85c28" p="172,64 586,64 586,90 172,90" />
    <P f="#b9702f" p="104,92 150,62 172,64 135,92" />
    <P f="#5a3a1c" w={3} p="140,90 172,64 172,90" />
    <P f="#a85e2a" p="588,60 612,60 623,92 590,92" />
    <P g="gPost" f="#99673c" p="102,128 160,128 165,645 108,645" />
    <P g="gPost" f="#99673c" p="565,128 624,128 620,645 563,645" />
    <P g="gOak" f="#e0aa4c" p="100,92 625,92 625,127 100,127" />
    <P g="gOakDark" f="#ad8738" p="160,129 565,129 565,157 160,157" />
    <P g="gOrange" f="#dc7a20" p="163,160 563,160 563,298 163,298" />
    <P g="gOrange" f="#dc7a20" p="166,310 563,310 563,481 166,481" />
    <P g="gOlive2" f="#bfa352" p="168,490 563,490 563,604 170,604" />
    <path d="M163 166H563" stroke="#7d5424" strokeWidth="3" opacity=".7" />
    <path d="M165 160V298H176V160ZM166 310V481H178V310ZM168 490V604H180V490Z" fill="#6b3e12" opacity=".35" />
    <path d="M163 304H563" stroke="#3b2108" strokeWidth="7" /><path d="M163 298H563M163 309H563" stroke="#000" strokeWidth="4" />
    <path d="M450 303H560" stroke="#a8641f" strokeWidth="3" />
    <path d="M163 486H563" stroke="#000" strokeWidth="12" />
    <Holes pts={[[247, 183], [362, 183], [478, 183], [248, 240], [362, 240], [478, 240], [249, 367], [363, 367], [478, 367], [249, 424], [363, 424], [478, 424], [251, 542], [364, 542], [477, 542]]} />
    <path d="M99 92V127L107 645M625 92V127L620 645M148 59H615M160 128 165 645M565 128 563 645" stroke="#000" strokeWidth="5" fill="none" />
  </>
);
const LowerBox = () => (
  <>
    <P w={0} f={SHADE} p="755,380 954,380 1066,514 745,848" />
    <P w={0} f={SHADE} p="137,845 188,806 668,806 668,780 137,780" />
    <P w={5} f="#89603a" p="58,100 70,190 68,662 51,662" />
    <P f="#a85e28" p="57,65 668,65 770,190 75,190" />
    <P g="gWalnut" w={0} f="#a85c28" p="122,70 608,70 608,104 130,104" />
    <P g="gYellow" f="#f5a416" p="128,105 608,105 608,183 140,183" />
    <P w={0} f="#9b7a1c" p="128,88 138,100 214,180 142,181" />
    <P f="#b56c2c" p="611,108 664,184 611,184" />
    <path d="M610 68V186" stroke="#000" strokeWidth="8" />
    <P g="gWalnut" f="#8f4f24" p="612,70 640,66 735,190 704,188" />
    <path d="M625 84 714 188" stroke="#000" strokeWidth="2.500" />
    <P g="gOak" f="#e8b05a" p="640,66 668,66 770,192 735,190" />
    <P g="gWalnut" f="#94502a" p="90,68 120,68 142,183 108,190" />
    <P g="gOak" f="#e0a856" p="57,65 88,67 108,190 75,190" />
    <path d="M57 64H668L770 192M108 188 135 183H690L735 190" stroke="#000" strokeWidth="5" fill="none" />
    <P g="gPost" w={5} f="#9c663a" p="73,232 142,232 136,846 67,846" />
    <P w={5} f="#83552f" p="664,786 680,786 676,849 664,825" />
    <P g="gPost" w={5} f="#9c663a" p="698,232 769,232 743,850 676,850" />
    <P g="gYellow" w={5} f="#f8a717" p="143,232 698,232 690,432 142,432" />
    <P g="gYellow" w={5} f="#f8a717" p="141,436 690,438 682,641 140,641" />
    <P g="gOlive" w={5} f="#cdb22c" p="139,645 682,645 679,783 137,783" />
    <path d="M141 434H690M139 643H682" stroke="#000" strokeWidth="6" /><path d="M142 444H690M140 655H681" stroke="#221704" strokeWidth="2" />
    <P g="gWalnut" w={5} f="#a85c28" p="108,190 735,190 735,231 108,231" />
    <P w={5} f="url(#hatch)" p="75,190 107,190 107,230 75,230" /><P w={5} f="url(#hatch)" p="736,192 769,192 769,231 736,231" />
    <Holes pts={[[239, 164], [361, 164], [484, 164], [279, 298], [418, 298], [557, 298], [210, 331], [626, 333], [279, 365], [417, 365], [555, 365], [276, 511], [412, 511], [550, 511], [207, 543], [618, 543], [274, 576], [412, 576], [547, 576], [204, 712], [272, 712], [408, 712], [544, 712], [612, 714]]} />
  </>
);
const Scene = () => (
  <Canvas viewBox="82 91 1514 905" fill="none">
    <defs>
      <linearGradient id="sky" x2="0" y2="1"><stop stopColor="#2aabe1" /><stop offset=".5" stopColor="#70c6ea" /><stop offset="1" stopColor="#bbe6f7" /></linearGradient>
      <pattern id="hatch" width="7" height="7" patternUnits="userSpaceOnUse" patternTransform="rotate(-45)"><rect width="7" height="7" fill="#fff" /><rect width="2" height="7" fill="#bbb" /></pattern>
      <Grain id="gOrange" freq=".025 .006" c={[0.92, 0.62, 0.29]} a={1.7} seed="4" />
      <Grain id="gYellow" freq=".025 .005" c={[0.91, 0.72, 0.29]} a={1.8} seed="8" />
      <Grain id="gWalnut" freq=".04 .01" c={[0.78, 0.45, 0.2]} a={0.8} seed="2" />
      <Grain id="gPost" freq=".008 .012" c={[0.7, 0.46, 0.26]} a={1} seed="5" />
      <Grain id="gOak" freq=".02 .07" c={[0.7, 0.5, 0.18]} a={1.3} seed="7" />
      <Grain id="gOakDark" freq=".015 .06" c={[0.78, 0.6, 0.25]} a={1} seed="6" />
      <Grain id="gOlive" freq=".006 .05" c={[0.88, 0.85, 0.46]} a={1.7} seed="3" />
      <Grain id="gOlive2" freq=".008 .04" c={[0.8, 0.55, 0.16]} a={1.3} seed="9" />
    </defs>
    <rect x="82" y="91" width="1514" height="161" fill="url(#sky)" />
    <rect x="82" y="252" width="1514" height="744" fill={GROUND} />
    <path d="M82 435 858 252.500" stroke="#2fb02f" strokeWidth="1" />
    <g transform="translate(680 320) scale(.33333)"><Table /><UpperBox /></g>
    <g transform="translate(880 530) scale(.33333)"><LowerBox /></g>
  </Canvas>
);

/* ---------- tray parts ---------- */
const Header = ({ title, open, gap, ls }) => (
  <PanelHeader $gap={gap}>
    <Glyph $w={9} viewBox="0 0 9 9"><path d={open ? "M0 .5h8L4 7.500Z" : "M1 .500v8L8 4.500Z"} fill="#000" /></Glyph>
    <Grow $ls={ls}>{title}</Grow>
    <PanelClose><CloseFace><Glyph $w={7} viewBox="0 0 7 7"><path d="M1 1.500 6 6.500M6 1.500 1 6.500" stroke="#222" strokeWidth="1.700" /></Glyph></CloseFace></PanelClose>
  </PanelHeader>
);
const Detail = () => <Glyph $w={16} $h={18} viewBox="0 0 16 18"><path d="M5 0 16 9 5 18V14H8V4H5Z" fill="#000" /><rect x=".5" y="3.500" width="8" height="11" fill="#eee" stroke="#222" /><rect x="1" y="4" width="7" height="4" fill="#2f7fe0" /><path d="M2 10H7M2 12H7" stroke="#888" /></Glyph>;
const NavArrow = ({ flip }) => <Glyph $w={15} $h={15} viewBox="0 0 15 15"><path transform={flip ? "matrix(-1 0 0 1 15 0)" : undefined} d="M1 7.500 8 1V5H14V10H8V14Z" fill="#f4f4f4" stroke="#8f8f8f" strokeWidth="1.200" /></Glyph>;
const COLORS = ["#ffcccc", "#ff9999", "#ff6666", "#ff3333", "#ff0000", "#cc0000", "#990000", "#660000", "#ffd6cc", "#ffb099", "#ff8c66", "#ff6633", "#ff4000", "#cc3300", "#992600", "#661a00"];

const MENU = [["File", 35], ["Edit", 38], ["View", 43], ["Camera", 61], ["Draw", 47], ["Tools", 47], ["Window", 63], ["Extensions", 76], ["Help", 40]];

export default function App() {
  return (
    <Window>
      <Global />
      <TitleBar>
        <Glyph $w={18} viewBox="0 0 18 18"><rect x=".5" y=".5" width="17" height="17" fill="#e3edf5" stroke="#b7cddf" /><path d="M9 2 15 5V12L9 16 3 12V6Z" fill="#2b7bb5" /><path d="M4 7 9 4 14 7M5 9Q9 6 13 9V12M5 12 9 14" stroke="#124f80" fill="none" /></Glyph>
        <Title>Kotak fermentasi Kakao.skp - SketchUp Pro 2022</Title>
        <WindowButton><Glyph $w={10} viewBox="0 0 10 10"><path d="M0 5.500H10" stroke="#777" /></Glyph></WindowButton>
        <WindowButton><Glyph $w={10} viewBox="0 0 10 10"><path d="M.5 2.500H7.500V9.500H.5ZM2.500 2V.5H9.500V7.500H8" stroke="#777" fill="none" /></Glyph></WindowButton>
        <WindowButton><Glyph $w={10} viewBox="0 0 10 10"><path d="M0 0 10 10M10 0 0 10" stroke="#777" /></Glyph></WindowButton>
      </TitleBar>
      <MenuBar>{MENU.map(([m, w]) => <MenuItem key={m} $w={w}>{m}</MenuItem>)}</MenuBar>
      <ToolbarRow>
        {TOP.map((bar, i) => (
          <Toolbar key={i}>
            <Grip />
            {bar.map((T, j) => {
              if (T === "|") return <Divider key={j} />;
              const active = Array.isArray(T);
              const C = active ? T[0] : T;
              return <ToolButton key={j} $active={active}><C /></ToolButton>;
            })}
          </Toolbar>
        ))}
      </ToolbarRow>
      <Main>
        <LeftDock>
          <LeftToolbar>
            <Grip as="div" $horizontal />
            {LEFT.map((group, i) => (
              <React.Fragment key={i}>
                {i > 0 && <Divider as="div" $horizontal />}
                <ToolGrid $first={i === 0}>{group.map((C, j) => <ToolButton key={j} $active={i === 0 && j === 0}><C /></ToolButton>)}</ToolGrid>
              </React.Fragment>
            ))}
          </LeftToolbar>
        </LeftDock>
        <Viewport><Scene /></Viewport>
        <Tray>
          <TrayHeader>
            <Grow $ls={-0.25}>Default Tray</Grow>
            <Glyph $w={9} $h={10} viewBox="0 0 9 10"><path d="M2 .5H7M2.500 0V5.500M6 0V5.500M0 6H9M4.500 6V10" stroke="#000" strokeWidth="1.200" /></Glyph>
            <TrayClose><Glyph $w={6} viewBox="0 0 6 6"><path d="M.5.500 5.500 5.500M5.500.500.500 5.500" stroke="#fff" strokeWidth="1.500" /></Glyph></TrayClose>
          </TrayHeader>
          <TrayBody>
            <Panels>
              <Header title="Entity Info" open ls={-0.1} />
              <EntityBody><Selection>No Selection</Selection></EntityBody>
              <Header title="Materials" open ls={0.15} />
              <MaterialTop>
                <Preview $size={77} $framed />
                <NameField>Default</NameField>
                <IconStack>
                  <Glyph $w={12} $h={18} viewBox="0 0 12 18"><rect x=".5" y=".5" width="11" height="8" fill="#fff" stroke="#888" /><path d="M2 2H10L6 7Z" fill="#000" /><rect y="8" width="12" height="10" fill="#000" /><path d="M3 13H9M6 10V16" stroke="#fff" strokeWidth="1.800" /></Glyph>
                  <Glyph $w={20} $h={20} viewBox="0 0 20 20"><path d="M2 6 12 1 19 5V14L9 20 2 15Z" fill="#111" /><path d="M4 6 11 3M8 7 16 3M11 10 17 7M11 14 17 11" stroke="#d9cfa2" strokeWidth="1.300" /><circle cx="6" cy="14" r="5" fill="#fff" stroke="#222" /><path d="M3 14H9M6 11V17" stroke="#222" /></Glyph>
                  <Preview $size={26} />
                </IconStack>
              </MaterialTop>
              <Tabs>
                <Tab $active $w={49}>Select</Tab><Tab $w={38}>Edit</Tab>
                <Dropper><Glyph $w={20} viewBox="0 0 20 20"><path d="M1 19 3 14 11 6 14 9 6 17Z" fill="#d8d8d8" stroke="#333" /><path d="M1 19 3 14 6 11 9 14 6 17Z" fill="#f0c030" /><path d="M10 4 16 10M12 6Q13 0 18 1T14 8Z" stroke="#222" strokeWidth="2" fill="#444" /></Glyph></Dropper>
              </Tabs>
              <NavRow>
                <NavIcon $mr={13}><NavArrow /></NavIcon><NavIcon $mr={10}><NavArrow flip /></NavIcon>
                <NavIcon><Glyph $w={20} viewBox="0 0 20 20"><path d="M4 9V18.500H16V9" fill="#fff" stroke="#000" strokeWidth="1.800" /><path d="M1 10 10 1.500 19 10" stroke="#000" strokeWidth="1.600" fill="#fff" /><rect x="7.500" y="11" width="5" height="8" fill="#000" /><path d="M4 2V6" stroke="#000" strokeWidth="2" /></Glyph></NavIcon>
                <Select>Colors<Glyph $w={9} $h={6} viewBox="0 0 9 6"><path d="M.5.500 4.500 5 8.500.500" stroke="#555" fill="none" /></Glyph></Select>
                <NavIcon><Detail /></NavIcon>
              </NavRow>
              <Library>
                <SwatchGrid>{COLORS.map((c) => <Swatch key={c} $c={c} />)}</SwatchGrid>
                <LibraryThumb />
              </Library>
              <Splitter />
              <Header title="Components" gap={1} ls={0.1} />
              <Header title="Styles" gap={1} />
              <Header title="Tags" open />
              <TagTools>
                <Glyph $w={16} viewBox="0 0 16 16"><circle cx="8" cy="8" r="7" stroke="#4a4a58" fill="none" /><path d="M4 8H12M8 4V12" stroke="#4a4a58" /></Glyph>
                <TagGap $w={9} />
                <Glyph $w={22} $h={19} viewBox="0 0 22 19"><path d="M10 15.500H1.500V1.500H8L10 4H19V9" stroke="#4a4a58" fill="none" /><circle cx="16" cy="14" r="4.500" fill="#f0f0f0" stroke="#4a4a58" /><path d="M13.500 14H18.500M16 11.500V16.500" stroke="#4a4a58" /></Glyph>
                <Search>Search</Search>
                <Glyph $w={18} $h={19} viewBox="0 0 18 19"><path d="M1 18 3 9 11 1 17 7 9 16ZM1 18 5 14" stroke="#4a4a58" fill="#f8f8f8" /><circle cx="5.500" cy="13" r="1.500" stroke="#4a4a58" fill="none" /></Glyph>
                <TagGap $w={10} />
                <Glyph $w={18} $h={20} viewBox="0 0 18 20"><path d="M1 7 10 0 14 2 13 5 6 12 5 15 1 12Z" fill="#323246" /><path d="M7 13 15 6M5 15 8 17 16 10M8 19.500 16.500 13V4L14 2M8 17V19.500L4 17V14" stroke="#4a4a58" fill="none" /></Glyph>
                <TagGap $w={11} />
                <Detail />
              </TagTools>
              <TagTable>
                <TagRow $head>
                  <Cell $rule /><Cell $rule $pl={5} $pr={7} $j="space-between" $ls={-0.2}>Name<Glyph $w={10} $h={6} viewBox="0 0 10 6"><path d="M.5.500 5 5 9.500.500" stroke="#222" strokeWidth="1.500" fill="none" /></Glyph></Cell><Cell $rule /><Cell $rule $pl={5} $ls={-0.4}>Dashes</Cell><Cell $rule />
                </TagRow>
                <TagRow>
                  <Cell $j="center"><Glyph $w={14} $h={9} viewBox="0 0 14 9"><path d="M.5 5Q7-3 13.500 5 7 11 .5 5Z" fill="#fff" stroke="#111" strokeWidth="1.200" /><circle cx="7" cy="4.500" r="3" fill="#111" /></Glyph></Cell>
                  <Cell $pl={1} $ls={-0.3}>Untagged</Cell><Cell /><Cell $pl={5} $ls={-0.3}>Default</Cell>
                  <Cell $pl={17}><Glyph $w={14} viewBox="0 0 14 14"><path d="M1 13 2.500 9.500 11 1 13 2.500 4.500 11.500Z" fill="#a3272b" stroke="#4b1313" strokeWidth=".7" /><path d="M.5 13.500 2.500 9.500 4.500 11.500Z" fill="#444" /></Glyph></Cell>
                </TagRow>
              </TagTable>
              <BottomSplit />
              <Header title="Shadows" ls={0.1} />
            </Panels>
            <TrayScroll />
          </TrayBody>
        </Tray>
      </Main>
      <StatusBar>
        <Glyph $w={16} viewBox="0 0 16 16"><circle cx="8" cy="8" r="7.200" stroke="#a5a5a5" fill="none" /><path d="M8 3.500A3 3 0 0 1 9.800 8.500L9 12H7L6.200 8.500A3 3 0 0 1 8 3.500Z" fill="#8e8e8e" /></Glyph>
        <TagGap $w={16} />
        <Glyph $w={16} viewBox="0 0 16 16"><circle cx="8" cy="8" r="7.200" stroke="#000" strokeWidth="1.300" fill="none" /><circle cx="8" cy="4.300" r="1.500" fill="#000" /><path d="M6 6.500H9.500V12.500H7V8.500H6Z" fill="#000" /></Glyph>
        <TagGap $w={12} />
        <Bar />
        <StatusText>Click or drag to select objects. Shift = Add/Subtract. Ctrl = Add. Shift + Ctrl = Subtract.</StatusText>
        <Bar $mr={12} />
        <MeasureLabel>Measurements</MeasureLabel>
        <MeasureBox />
      </StatusBar>
    </Window>
  );
}
